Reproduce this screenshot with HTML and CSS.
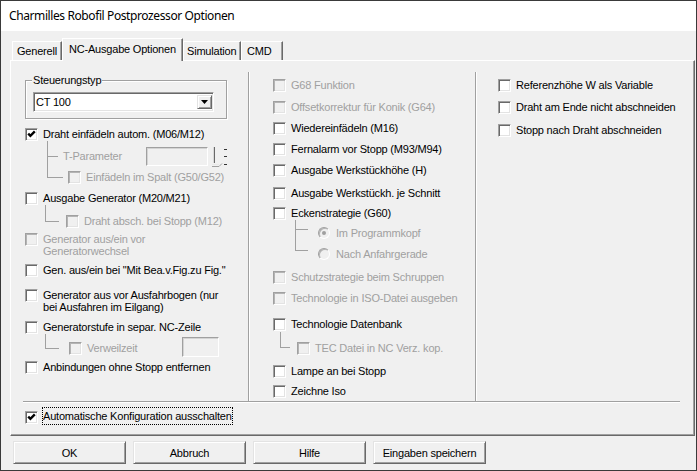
FILE: index.html
```html
<!DOCTYPE html>
<html lang="de">
<head>
<meta charset="utf-8">
<title>Charmilles Robofil Postprozessor Optionen</title>
<link rel="stylesheet" href="styles.css">
</head>
<body>
<div class="window">
  <div class="titlebar">Charmilles Robofil Postprozessor Optionen</div>
  <div class="client">
    <div class="tabs">
      <div class="tab t-gen">Generell</div>
      <div class="tab active t-nc">NC-Ausgabe Optionen</div>
      <div class="tab t-sim">Simulation</div>
      <div class="tab t-cmd">CMD</div>
    </div>
    <div class="panel">
      <div class="cols">
        <div class="col col1">
          <fieldset class="group">
            <legend>Steuerungstyp</legend>
            <div class="combo">
              <span class="combo-text">CT 100</span>
              <span class="combo-btn"><svg width="7" height="4" viewBox="0 0 7 4"><path d="M0 0h7L3.5 4z" fill="#000"/></svg></span>
            </div>
          </fieldset>
          <div class="row h22 after-group"><span class="cb"><svg class="chk" width="11" height="11" viewBox="0 0 11 11"><path d="M2.2 4.6L4.4 6.8L8.8 2.4" stroke="#000" stroke-width="2.4" fill="none"/></svg></span><span class="lbl">Draht einfädeln autom. (M06/M12)</span></div>
          <div class="row h21"><span class="br br-tp"></span><span class="lbl dis-t tp-lbl">T-Parameter</span><span class="inp inp-tp"></span><svg class="spin" width="18" height="22" viewBox="0 0 18 22"><path d="M3.5 1v16" stroke="#696969" stroke-width="1"/><path d="M2.5 1v16" stroke="#d8d8d8" stroke-width="1"/><path d="M1 20.5h7l3-3" stroke="#a0a0a0" stroke-width="1" fill="none"/><path d="M1 18.5h7" stroke="#e8e8e8" stroke-width="1"/><path d="M13 3.5h3M13 10.5h3M13 18.5h3" stroke="#333" stroke-width="1"/></svg></div>
          <div class="row h21"><span class="br br-einf"></span><span class="cb dis"></span><span class="lbl dis-t">Einfädeln im Spalt (G50/G52)</span></div>
          <div class="row h23"><span class="cb"></span><span class="lbl">Ausgabe Generator (M20/M21)</span></div>
          <div class="row h18"><span class="br br-abs"></span><span class="cb dis"></span><span class="lbl dis-t">Draht absch. bei Stopp (M12)</span></div>
          <div class="row h31"><span class="cb dis"></span><span class="lbl two dis-t">Generator aus/ein vor<br>Generatorwechsel</span></div>
          <div class="row h25"><span class="cb"></span><span class="lbl">Gen. aus/ein bei "Mit Bea.v.Fig.zu Fig."</span></div>
          <div class="row h32"><span class="cb"></span><span class="lbl two">Generator aus vor Ausfahrbogen (nur<br>bei Ausfahren im Eilgang)</span></div>
          <div class="row h21"><span class="cb"></span><span class="lbl">Generatorstufe in separ. NC-Zeile</span></div>
          <div class="row h19"><span class="br br-vz"></span><span class="cb dis"></span><span class="lbl dis-t vz-lbl">Verweilzeit</span><span class="inp inp-vz"></span></div>
          <div class="row"><span class="cb"></span><span class="lbl">Anbindungen ohne Stopp entfernen</span></div>
        </div>
        <div class="col col2">
          <div class="row h22"><span class="cb dis"></span><span class="lbl dis-t">G68 Funktion</span></div>
          <div class="row h21"><span class="cb dis"></span><span class="lbl dis-t">Offsetkorrektur für Konik (G64)</span></div>
          <div class="row h21"><span class="cb"></span><span class="lbl">Wiedereinfädeln (M16)</span></div>
          <div class="row h21"><span class="cb"></span><span class="lbl">Fernalarm vor Stopp (M93/M94)</span></div>
          <div class="row h23"><span class="cb"></span><span class="lbl">Ausgabe Werkstückhöhe (H)</span></div>
          <div class="row h20"><span class="cb"></span><span class="lbl">Ausgabe Werkstückh. je Schnitt</span></div>
          <div class="row h20"><span class="cb"></span><span class="lbl">Eckenstrategie (G60)</span></div>
          <div class="row h21"><span class="br br-r1"></span><span class="rad"><span class="dot"></span></span><span class="lbl dis-t">Im Programmkopf</span></div>
          <div class="row h23"><span class="br br-r2"></span><span class="rad"></span><span class="lbl dis-t">Nach Anfahrgerade</span></div>
          <div class="row h21"><span class="cb dis"></span><span class="lbl dis-t">Schutzstrategie beim Schruppen</span></div>
          <div class="row h26"><span class="cb dis"></span><span class="lbl dis-t">Technologie in ISO-Datei ausgeben</span></div>
          <div class="row h24"><span class="cb"></span><span class="lbl">Technologie Datenbank</span></div>
          <div class="row h23"><span class="br br-tec"></span><span class="cb dis"></span><span class="lbl dis-t">TEC Datei in NC Verz. kop.</span></div>
          <div class="row h20"><span class="cb"></span><span class="lbl">Lampe an bei Stopp</span></div>
          <div class="row"><span class="cb"></span><span class="lbl">Zeichne Iso</span></div>
        </div>
        <div class="col col3">
          <div class="row h22"><span class="cb"></span><span class="lbl">Referenzhöhe W als Variable</span></div>
          <div class="row h23"><span class="cb"></span><span class="lbl">Draht am Ende nicht abschneiden</span></div>
          <div class="row"><span class="cb"></span><span class="lbl">Stopp nach Draht abschneiden</span></div>
        </div>
      </div>
      <div class="row auto"><span class="cb"><svg class="chk" width="11" height="11" viewBox="0 0 11 11"><path d="M2.2 4.6L4.4 6.8L8.8 2.4" stroke="#000" stroke-width="2.4" fill="none"/></svg></span><span class="lbl focus">Automatische Konfiguration ausschalten</span></div>
    </div>
    <div class="buttons">
      <button class="btn">OK</button>
      <button class="btn">Abbruch</button>
      <button class="btn">Hilfe</button>
      <button class="btn">Eingaben speichern</button>
    </div>
  </div>
</div>
</body>
</html>
```
FILE: styles.css
```css
* { box-sizing: border-box; }
html, body { margin: 0; padding: 0; }
body {
  width: 697px;
  height: 471px;
  overflow: hidden;
  background: #f0f0f0;
  color: #000;
  font-family: "Liberation Sans", Arial, sans-serif;
  font-size: 11px;
  letter-spacing: -0.2px;
}
.window {
  width: 697px;
  height: 471px;
  border: 1px solid #3a3a3a;
  background: #f0f0f0;
  display: flex;
  flex-direction: column;
}
.titlebar {
  height: 30px;
  flex: none;
  background: #fff;
  padding-left: 8px;
  line-height: 30px;
  font-family: "Noto Sans", "Open Sans", sans-serif;
  font-size: 12px;
  letter-spacing: -0.4px;
  color: #000;
}
.client { flex: 1; display: flex; flex-direction: column; }

/* tabs */
.tabs {
  display: flex;
  align-items: flex-end;
  height: 22px;
  margin-top: 7px;
  padding-left: 11px;
  position: relative;
  z-index: 1;
}
.tab {
  height: 19px;
  line-height: 18px;
  background: #f0f0f0;
  border-left: 1px solid #fff;
  border-top: 1px solid #fff;
  border-right: 1px solid #696969;
  box-shadow: inset -1px 0 #a0a0a0;
  white-space: nowrap;
}
.tab.active {
  height: 23px;
  line-height: 20px;
  margin-bottom: -1px;
}
.t-gen { width: 50px; padding-left: 4px; }
.t-nc { width: 121px; padding-left: 6px; }
.t-sim { width: 58px; padding-left: 3px; }
.t-cmd { width: 42px; padding-left: 5px; }

/* panel */
.panel {
  margin-left: 9px;
  width: 685px;
  height: 376px;
  flex: none;
  border-top: 1px solid #fff;
  border-left: 1px solid #fff;
  border-right: 1px solid #696969;
  border-bottom: 1px solid #696969;
  box-shadow: inset -1px -1px #a0a0a0;
}
.cols {
  display: flex;
  margin: 11px 0 0 12px;
  width: 657px;
  height: 330px;
  border-bottom: 1px solid #a0a0a0;
  box-shadow: 0 1px 0 #fff;
}
.col1 { width: 226px; flex: none; border-right: 1px solid #a0a0a0; }
.col2 { width: 227px; flex: none; border-left: 1px solid #fff; border-right: 1px solid #a0a0a0; padding-top: 5px; }
.col3 { flex: 1; border-left: 1px solid #fff; padding-top: 5px; }

/* group box */
.group {
  margin: 2px 0 0 2px;
  width: 202px;
  padding: 0 0 6px 6px;
  border: 1px solid #a0a0a0;
  box-shadow: inset 1px 1px #fff, 1px 1px #fff;
  min-width: 0;
}
.group legend {
  padding: 0 1px;
  line-height: 13px;
  background: #f0f0f0;
}
.combo {
  margin: 5px 0 0 1px;
  width: 181px;
  height: 20px;
  display: flex;
  background: #fff;
  border: 1px solid;
  border-color: #a0a0a0 #fff #fff #a0a0a0;
  box-shadow: inset 1px 1px #696969, inset -1px -1px #e3e3e3;
  padding: 2px 1px 2px 2px;
}
.combo-text { line-height: 14px; }
.combo-btn {
  margin-left: auto;
  width: 15px;
  height: 14px;
  display: flex;
  align-items: center;
  justify-content: center;
  background: #f0f0f0;
  border: 1px solid;
  border-color: #e3e3e3 #696969 #696969 #e3e3e3;
  box-shadow: inset 1px 1px #fff, inset -1px -1px #a0a0a0;
}

/* rows */
.row {
  display: flex;
  align-items: flex-start;
  height: 21px;
  white-space: nowrap;
}
.h18 { height: 18px; }
.h19 { height: 19px; }
.h20 { height: 20px; }
.h21 { height: 21px; }
.h22 { height: 22px; }
.h23 { height: 23px; }
.h24 { height: 24px; }
.h25 { height: 25px; }
.h26 { height: 26px; }
.h31 { height: 31px; }
.h32 { height: 32px; }
.col1 .row { padding-left: 2px; }
.col2 .row { padding-left: 23px; }
.col3 .row { padding-left: 21px; }
.after-group { margin-top: 7px; }

.lbl { line-height: 16px; }
.lbl.two { line-height: 12px; padding-top: 2px; white-space: nowrap; }
.dis-t { color: #a0a0a0; }

.cb {
  flex: none;
  width: 13px;
  height: 13px;
  margin-top: 2px;
  margin-right: 5px;
  background: #fff;
  border: 1px solid;
  border-color: #a0a0a0 #fff #fff #a0a0a0;
  box-shadow: inset 1px 1px #696969, inset -1px -1px #e3e3e3;
}
.cb.dis {
  background: #f0f0f0;
  box-shadow: inset 1px 1px #b4b4b4, inset -1px -1px #e3e3e3;
}
.chk { display: block; }

.rad {
  flex: none;
  width: 12px;
  height: 12px;
  margin-top: 2px;
  margin-right: 6px;
  border-radius: 50%;
  background: #f0f0f0;
  border: 1px solid;
  border-color: #a0a0a0 #fff #fff #a0a0a0;
  box-shadow: inset 1px 1px #b4b4b4;
  display: flex;
  align-items: center;
  justify-content: center;
}
.dot { width: 4px; height: 4px; border-radius: 50%; background: #a0a0a0; }

/* tree branches */
.br {
  flex: none;
  align-self: flex-start;
  border-left: 1px solid #a0a0a0;
  border-bottom: 1px solid #a0a0a0;
}
.br-tp { margin: -7px 5px 0 22px; width: 11px; height: 16px; }
.br-einf { margin: -12px 5px 0 22px; width: 16px; height: 21px; }
.br-abs { margin: -8px 7px 0 20px; width: 14px; height: 17px; }
.br-vz { margin: -6px 10px 0 20px; width: 14px; height: 15px; }
.br-r1 { margin: -5px 10px 0 22px; width: 13px; height: 10px; }
.br-r2 { margin: -16px 10px 0 22px; width: 13px; height: 21px; }
.br-tec { margin: -8px 7px 0 7px; width: 10px; height: 16px; }

/* disabled edits */
.inp {
  flex: none;
  background: #f0f0f0;
  border: 1px solid;
  border-color: #a0a0a0 #fff #fff #a0a0a0;
  box-shadow: inset 1px 1px #d4d4d4;
}
.tp-lbl { width: 83px; }
.inp-tp { width: 62px; height: 19px; margin-top: -1px; }
.spin { flex: none; margin: -2px 0 0 3px; display: block; }
.vz-lbl { width: 95px; }
.inp-vz { width: 37px; height: 20px; margin-top: -3px; }

.auto { margin-top: 7px; padding-left: 14px; height: 18px; }
.focus {
  margin-top: -2px;
  margin-left: -1px;
  border: 1px dotted #000;
  line-height: 16px;
  padding: 0;
}

/* buttons */
.buttons {
  display: flex;
  gap: 7px;
  margin: 5px 0 0 12px;
}
.btn {
  width: 113px;
  height: 23px;
  padding: 0;
  font: inherit;
  letter-spacing: inherit;
  color: #000;
  background: #f0f0f0;
  border: 1px solid;
  border-color: #e3e3e3 #696969 #696969 #e3e3e3;
  box-shadow: inset 1px 1px #fff, inset -1px -1px #a0a0a0;
  border-radius: 0;
}
```
